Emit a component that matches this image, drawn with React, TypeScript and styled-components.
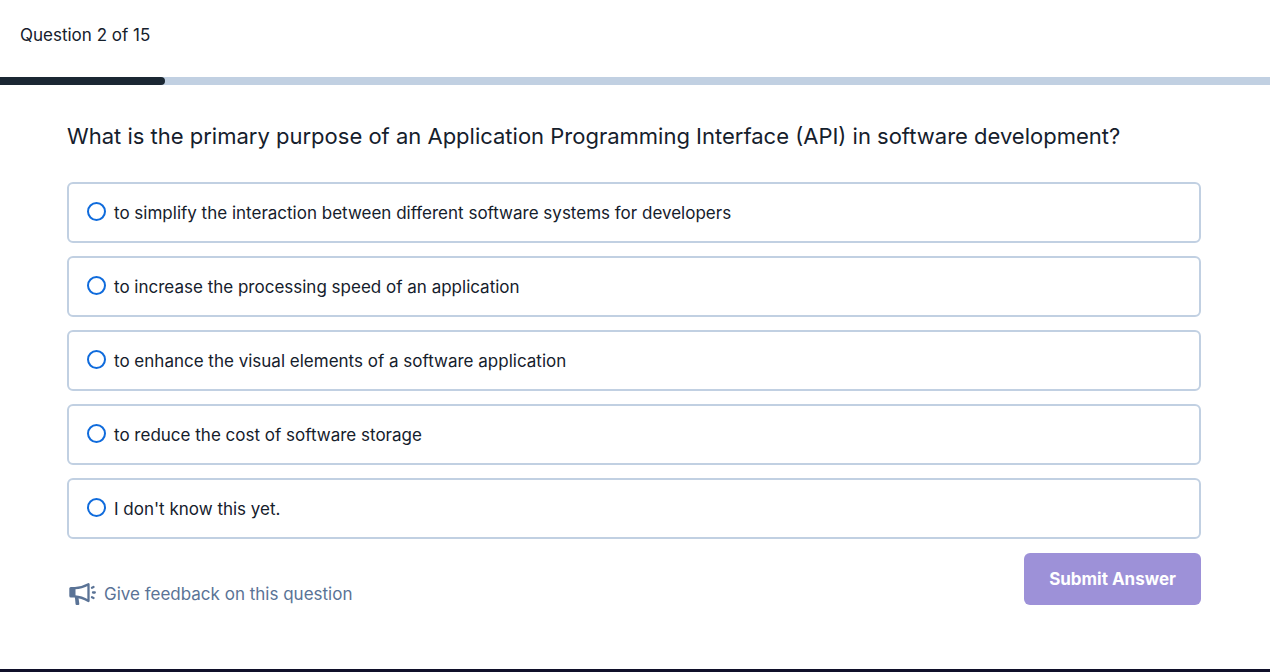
import React, { useState } from 'react';
import styled, { createGlobalStyle } from 'styled-components';

const GlobalStyle = createGlobalStyle`
  *, *::before, *::after { box-sizing: border-box; }
  body {
    margin: 0;
    background: #fff;
    color: #15202c;
    font-family: Inter, 'Liberation Sans', sans-serif;
  }
`;

const Page = styled.div`
  display: flex;
  flex-direction: column;
  min-height: 100vh;
`;

const Header = styled.header`
  padding: 23px 20px 30px;
  font-size: 17px;
  line-height: 24px;
`;

const ProgressTrack = styled.div`
  height: 8px;
  background: #c1d0e2;
`;

const ProgressFill = styled.div`
  height: 100%;
  background: #1b2733;
  border-radius: 0 4px 4px 0;
`;

const Quiz = styled.form`
  flex: 1;
  padding: 35px 69px 63px 67px;
`;

const Prompt = styled.h1`
  margin: 0 0 30px;
  font-size: 22px;
  font-weight: 400;
  line-height: 32px;
`;

const Options = styled.div`
  display: flex;
  flex-direction: column;
  gap: 13px;
`;

const Option = styled.label`
  display: flex;
  align-items: center;
  gap: 8px;
  min-height: 61px;
  padding: 8px 18px;
  border: 2px solid #c1d0e2;
  border-radius: 6px;
  font-size: 17px;
  line-height: 24px;
  cursor: pointer;
`;

const Radio = styled.input`
  appearance: none;
  flex: none;
  width: 19px;
  height: 19px;
  margin: 0 0 2px;
  border: 2px solid #0f6bdc;
  border-radius: 50%;
  background: #fff;

  &:checked {
    background: #0f6bdc;
    box-shadow: inset 0 0 0 3px #fff;
  }
`;

const Actions = styled.div`
  display: flex;
  justify-content: space-between;
  align-items: flex-start;
  margin-top: 14px;
`;

const FeedbackLink = styled.a`
  display: flex;
  align-items: center;
  gap: 8px;
  margin: 29px 0 0 2px;
  color: #5a7396;
  font-size: 17px;
  line-height: 24px;
  text-decoration: none;
`;

const SubmitButton = styled.button`
  padding: 14px 25px;
  border: 0;
  border-radius: 6px;
  background: #9d91d8;
  color: #fff;
  font: 700 17px/24px Inter, 'Liberation Sans', sans-serif;
`;

const Footer = styled.footer`
  height: 3px;
  background: #10102a;
`;

const MegaphoneIcon = () => (
  <svg width="27" height="24" viewBox="0 0 27 24" fill="none" stroke="currentColor" aria-hidden="true">
    <path d="M0.3 6.5Q0.3 5 1.8 5H6.5V15.5H1.8Q0.3 15.5 0.3 14Z" fill="currentColor" stroke="none" />
    <path d="M6 6.2C11 6 15 4.6 19.5 2.2V19C15 16.4 11 14.8 6 14.5" strokeWidth="2.3" strokeLinejoin="round" />
    <path d="M5.8 14.5H9.4L10.3 22Q10.3 23 9.3 23H7.5Q6.7 23 6.6 22.2Z" fill="currentColor" stroke="none" />
    <path d="M23 5.7L24.5 5M24 10.5H25.8M23 15.3L24.5 16" strokeWidth="2.3" strokeLinecap="round" />
  </svg>
);

const choices = [
  'to simplify the interaction between different software systems for developers',
  'to increase the processing speed of an application',
  'to enhance the visual elements of a software application',
  'to reduce the cost of software storage',
  "I don't know this yet.",
];

export default function App() {
  const [selected, setSelected] = useState<number | null>(null);
  const progress = 13;

  return (
    <Page>
      <GlobalStyle />
      <Header>Question 2 of 15</Header>
      <ProgressTrack role="progressbar" aria-label="Quiz progress" aria-valuenow={progress} aria-valuemin={0} aria-valuemax={100}>
        <ProgressFill style={{ width: `${progress}%` }} />
      </ProgressTrack>
      <Quiz onSubmit={(event) => event.preventDefault()}>
        <Prompt id="prompt">
          What is the primary purpose of an Application Programming Interface (API) in software development?
        </Prompt>
        <Options role="radiogroup" aria-labelledby="prompt">
          {choices.map((choice, index) => (
            <Option key={choice} htmlFor={`choice-${index}`}>
              <Radio
                type="radio"
                id={`choice-${index}`}
                name="answer"
                checked={selected === index}
                onChange={() => setSelected(index)}
              />
              <span>{choice}</span>
            </Option>
          ))}
        </Options>
        <Actions>
          <FeedbackLink href="#feedback">
            <MegaphoneIcon />
            <span>Give feedback on this question</span>
          </FeedbackLink>
          <SubmitButton type="submit" disabled={selected === null}>Submit Answer</SubmitButton>
        </Actions>
      </Quiz>
      <Footer />
    </Page>
  );
}
